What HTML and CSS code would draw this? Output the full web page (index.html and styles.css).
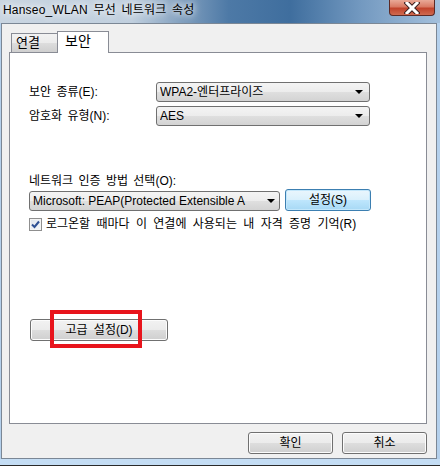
FILE: index.html
```html
<!DOCTYPE html>
<html lang="ko">
<head>
    <meta charset="UTF-8">
    <title>Hanseo_WLAN 무선 네트워크 속성</title>
    <link rel="stylesheet" href="styles.css">
</head>
<body>
    <div class="window">
        <div class="titlebar">
            <span class="title">Hanseo_WLAN 무선 네트워크 속성</span>
            <div class="close">
                <svg width="16" height="12" viewBox="0 0 16 12">
                    <path d="M3 1 L13 11 M13 1 L3 11" stroke="#3a2020" stroke-width="5" stroke-linecap="square"/>
                    <path d="M3 1 L13 11 M13 1 L3 11" stroke="#fff" stroke-width="3" stroke-linecap="square"/>
                </svg>
            </div>
        </div>
        <div class="client">
            <div class="tabs">
                <div class="tab">연결</div>
                <div class="tab active">보안</div>
            </div>
            <div class="panel">
                <div class="field-row">
                    <span class="field-label">보안 종류(E):</span>
                    <div class="combo combo-wide"><span class="combo-text">WPA2-엔터프라이즈</span><span class="arrow"></span></div>
                </div>
                <div class="field-row">
                    <span class="field-label">암호화 유형(N):</span>
                    <div class="combo combo-wide"><span class="combo-text">AES</span><span class="arrow"></span></div>
                </div>

                <div class="auth-label">네트워크 인증 방법 선택(O):</div>
                <div class="auth-row">
                    <div class="combo combo-auth"><span class="combo-text">Microsoft: PEAP(Protected Extensible A</span><span class="arrow"></span></div>
                    <button class="btn btn-focus btn-settings">설정(S)</button>
                </div>
                <div class="check-row">
                    <span class="checkbox">
                        <svg width="9" height="9" viewBox="0 0 9 9">
                            <path d="M1 4.5 L3.5 7 L8 1.5" fill="none" stroke="#2e4f93" stroke-width="2"/>
                        </svg>
                    </span>
                    <span class="check-text">로그온할 때마다 이 연결에 사용되는 내 자격 증명 기억(R)</span>
                </div>

                <div class="advanced">
                    <button class="btn btn-advanced">고급 설정(D)</button>
                    <span class="highlight"></span>
                </div>
            </div>
            <div class="actions">
                <button class="btn btn-action">확인</button>
                <button class="btn btn-action">취소</button>
            </div>
        </div>
        <div class="bottom-strip"></div>
    </div>
</body>
</html>
```

FILE: styles.css
```css
body {
    margin: 0;
    font-family: "Liberation Sans", "Noto Sans CJK KR", sans-serif;
    font-size: 12px;
    color: #000;
}
.window {
    width: 440px;
    height: 466px;
    background-color: #b4d0ec;
    display: flex;
    flex-direction: column;
    overflow: hidden;
}
.titlebar {
    height: 23px;
    display: flex;
    justify-content: space-between;
    align-items: flex-start;
    background: linear-gradient(90deg, #c9d5e1 0%, #c0cfde 30%, #7e9dbd 42%, #4d79a6 52%, #3f6e9e 66%, #7399c0 82%, #a4c0dc 100%);
}
.title {
    padding: 3px 0 0 3px;
    line-height: 15px;
    text-shadow: 0 0 6px #fff, 0 0 10px #fff;
    letter-spacing: 0.2px;
    word-spacing: 2px;
}
.close {
    width: 46px;
    height: 16px;
    margin-right: 5px;
    border: 1px solid #5c2a26;
    border-top: none;
    border-radius: 0 0 4px 4px;
    background: linear-gradient(#e9a997 0%, #d97a64 45%, #c1432b 55%, #cf6a50 100%);
    display: flex;
    justify-content: center;
    align-items: center;
    box-sizing: border-box;
}
.client {
    width: 436px;
    height: 436px;
    margin-left: 1px;
    box-sizing: border-box;
    border: 1px solid #7b8795;
    background-color: #f0f0f0;
    padding: 7px 9px 0 7px;
    display: flex;
    flex-direction: column;
}
.tabs {
    display: flex;
    align-items: flex-end;
    height: 21px;
    margin-left: 2px;
}
.tab {
    box-sizing: border-box;
    width: 47px;
    height: 19px;
    border: 1px solid #898c95;
    border-bottom: none;
    background: linear-gradient(#f2f2f2 0%, #ebebeb 50%, #dddddd 51%, #cfcfcf 100%);
    font-size: 13px;
    line-height: 18px;
    padding-left: 4px;
}
.tab.active {
    width: 52px;
    height: 22px;
    margin-left: -1px;
    margin-bottom: -1px;
    background: #fff;
    position: relative;
    padding-left: 7px;
    line-height: 18px;
    font-size: 14px;
}
.panel {
    box-sizing: border-box;
    width: 418px;
    height: 372px;
    border: 1px solid #898c95;
    background-color: #fff;
    padding: 29px 0 0 19px;
}
.field-row {
    display: flex;
    align-items: center;
    height: 20px;
    margin-bottom: 4px;
}
.field-row + .field-row {
    margin-top: 1px;
}
.field-label {
    width: 127px;
    line-height: 16px;
    word-spacing: 2px;
}
.combo {
    box-sizing: border-box;
    height: 20px;
    border: 1px solid #707070;
    border-radius: 3px;
    background: linear-gradient(#f4f4f4 0%, #ececec 50%, #dfdfdf 51%, #d3d3d3 100%);
    display: flex;
    align-items: center;
    padding: 0 6px 0 3px;
}
.combo-wide {
    width: 214px;
}
.combo-text {
    flex: 1;
    min-width: 0;
    white-space: nowrap;
    overflow: hidden;
    line-height: 16px;
}
.arrow {
    flex: none;
    width: 0;
    height: 0;
    margin-left: 4px;
    border-left: 4px solid transparent;
    border-right: 4px solid transparent;
    border-top: 4px solid #000;
}
.auth-label {
    margin-top: 48px;
    height: 15px;
    line-height: 15px;
    word-spacing: 2px;
}
.auth-row {
    display: flex;
    align-items: flex-end;
    gap: 5px;
    height: 22px;
}
.combo-auth {
    width: 251px;
    padding-right: 4px;
}
.btn {
    box-sizing: border-box;
    height: 22px;
    border: 1px solid #707070;
    border-radius: 3px;
    background: linear-gradient(#f2f2f2 0%, #ebebeb 50%, #dddddd 51%, #cfcfcf 100%);
    font-family: inherit;
    font-size: 12px;
    color: #000;
    padding: 0;
    line-height: 18px;
    word-spacing: 3px;
    box-shadow: inset 0 0 0 1px #fcfcfc;
}
.btn-focus {
    border-color: #3c7fb1;
    background: linear-gradient(#eaf6fd 0%, #d9f0fc 50%, #bee6fd 51%, #a7d9f5 100%);
    box-shadow: inset 0 0 0 1px #c3e7fb;
}
.btn-settings {
    width: 86px;
}
.check-row {
    display: flex;
    align-items: center;
    gap: 4px;
    margin-top: 6px;
    height: 14px;
    line-height: 14px;
}
.check-text {
    word-spacing: 3px;
}
.checkbox {
    box-sizing: border-box;
    width: 13px;
    height: 13px;
    border: 1px solid #8f8f8f;
    background: linear-gradient(135deg, #dfe4ec, #f4f6f9);
    box-shadow: inset 0 0 0 1px #f4f4f4;
    display: flex;
    align-items: center;
    justify-content: center;
}
.advanced {
    position: relative;
    width: 138px;
    margin: 88px 0 0 1px;
}
.btn-advanced {
    width: 138px;
    display: block;
}
.highlight {
    position: absolute;
    left: 20px;
    top: -9px;
    width: 92px;
    height: 38px;
    box-sizing: border-box;
    border: 4px solid #e8141c;
}
.actions {
    display: flex;
    justify-content: flex-end;
    gap: 9px;
    margin-top: 8px;
}
.btn-action {
    width: 85px;
}
.bottom-strip {
    height: 6px;
    margin-top: 0;
    background-color: #c4ddf4;
    border-bottom: 1px solid #2a2a2a;
}
```
